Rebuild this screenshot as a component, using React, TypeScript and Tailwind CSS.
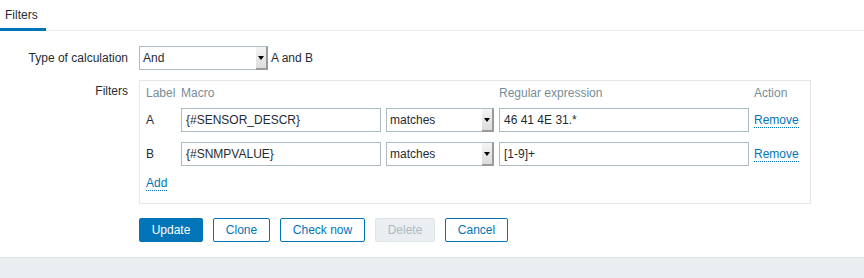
import React from "react";

const font = { fontFamily: '"Liberation Sans", Arial, sans-serif' };

function Select({ value, width }: { value: string; width: string }) {
  return (
    <div className={`flex h-[24px] border-y border-l border-[#acbbc2] bg-white ${width}`}>
      <span className="flex-1 truncate pl-[3px] leading-[22px]">{value}</span>
      <span className="mt-[-1px] mb-[-1px] flex w-[12px] items-center justify-center border-r-2 border-b-2 border-t border-t-[#acbbc2] border-r-[#9a9a9a] border-b-[#9a9a9a] bg-gradient-to-b from-[#f4f4f4] to-[#dcdcdc]">
        <span className="h-0 w-0 border-t-[4px] border-r-[3px] border-l-[3px] border-t-black border-r-transparent border-l-transparent" />
      </span>
    </div>
  );
}

function Input({ value, width }: { value: string; width: string }) {
  return (
    <div className={`h-[24px] border border-[#acbbc2] bg-white px-[4px] leading-[22px] ${width}`}>
      {value}
    </div>
  );
}

function LinkText({ children }: { children: React.ReactNode }) {
  return (
    <span className="border-b border-dotted border-[#0275b8] leading-[13px] text-[#0275b8]">
      {children}
    </span>
  );
}

const filters = [
  { label: "A", macro: "{#SENSOR_DESCR}", regex: "46 41 4E 31.*" },
  { label: "B", macro: "{#SNMPVALUE}", regex: "[1-9]+" },
];

const cols = "grid grid-cols-[30px_200px_108px_250px_auto] items-center gap-x-[5px]";

export default function App() {
  return (
    <div className="flex h-[278px] w-full flex-col bg-white text-[12px] text-[#1f2c33]" style={font}>
      <div className="flex h-[31px] border-b border-[#ebeef0]">
        <div className="h-[31px] w-[46px] border-b-[3px] border-[#0275b8] pt-[8px] pl-[5px] leading-[14px]">
          Filters
        </div>
      </div>

      <div className="flex flex-col pt-[15px]">
        <div className="flex items-center gap-[11px]">
          <div className="w-[128px] text-right">Type of calculation</div>
          <div className="flex items-center gap-[3px]">
            <Select value="And" width="w-[129px]" />
            <span>A and B</span>
          </div>
        </div>

        <div className="mt-[10px] flex items-start gap-[11px]">
          <div className="w-[128px] pt-[4px] text-right leading-[14px]">Filters</div>
          <div className="w-[672px] border border-[#e3e7e9] px-[6px] pt-[5px] pb-[13px]">
            <div className={`${cols} leading-[14px] text-[#768d99]`}>
              <span>Label</span>
              <span>Macro</span>
              <span />
              <span>Regular expression</span>
              <span>Action</span>
            </div>
            {filters.map((f, i) => (
              <div key={f.label} className={`${cols} ${i === 0 ? "mt-[8px]" : "mt-[10px]"}`}>
                <span>{f.label}</span>
                <Input value={f.macro} width="w-[200px]" />
                <Select value="matches" width="w-[108px]" />
                <Input value={f.regex} width="w-[250px]" />
                <span>
                  <LinkText>Remove</LinkText>
                </span>
              </div>
            ))}
            <div className="mt-[10px] leading-[14px]">
              <LinkText>Add</LinkText>
            </div>
          </div>
        </div>

        <div className="mt-[14px] mb-[15px] ml-[139px] flex gap-[10px]">
          <button className="h-[24px] w-[64px] rounded-[2px] border border-[#0275b8] bg-[#0275b8] text-white">
            Update
          </button>
          <button className="h-[24px] w-[57px] rounded-[2px] border border-[#0275b8] bg-white text-[#0275b8]">
            Clone
          </button>
          <button className="h-[24px] w-[85px] rounded-[2px] border border-[#0275b8] bg-white text-[#0275b8]">
            Check now
          </button>
          <button className="h-[24px] w-[60px] rounded-[2px] border border-[#dfe4e7] bg-[#ebeef0] text-[#acbbc2]">
            Delete
          </button>
          <button className="h-[24px] w-[63px] rounded-[2px] border border-[#0275b8] bg-white text-[#0275b8]">
            Cancel
          </button>
        </div>
      </div>

      <div className="flex-1 border-t border-[#dde2e5] bg-[#ebeef0]" />
    </div>
  );
}
